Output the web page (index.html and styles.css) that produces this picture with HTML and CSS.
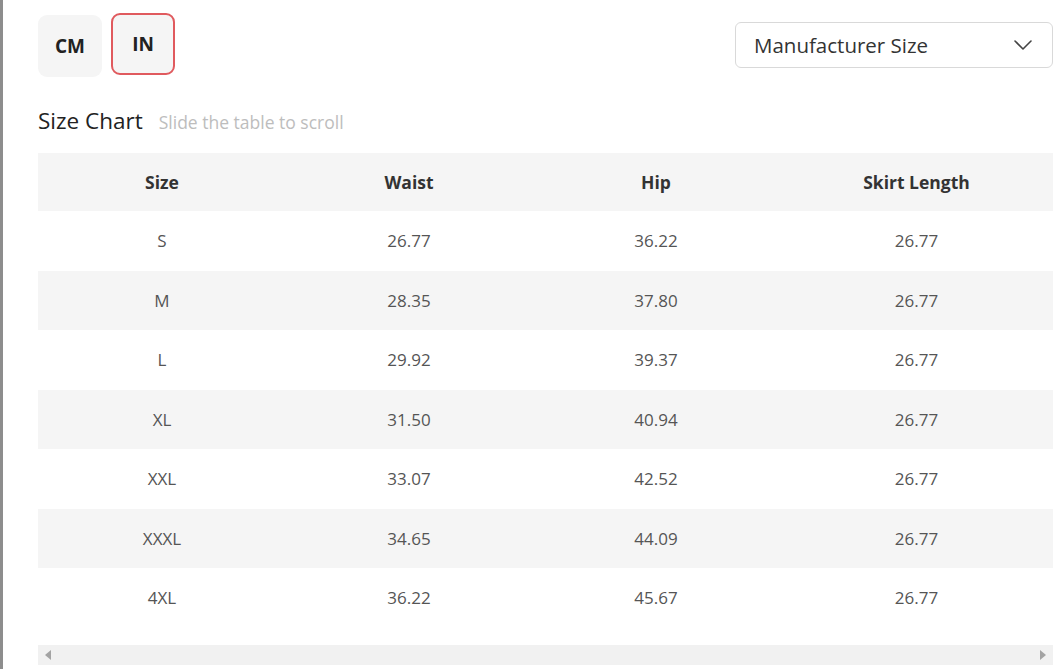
FILE: index.html
```html
<!DOCTYPE html>
<html lang="en">
<head>
<meta charset="utf-8">
<title>Size Chart</title>
<link rel="stylesheet" href="styles.css">
</head>
<body>
<div class="page">
  <div class="top">
    <div class="units">
      <button class="unit">CM</button>
      <button class="unit active">IN</button>
    </div>
    <div class="select">
      <span>Manufacturer Size</span>
      <svg class="chev" width="20" height="12" viewBox="0 0 20 12"><path d="M2 2 L10 10 L18 2" fill="none" stroke="#444" stroke-width="1.6" stroke-linecap="round" stroke-linejoin="round"/></svg>
    </div>
  </div>
  <div class="title">
    <h2>Size Chart</h2>
    <span class="hint">Slide the table to scroll</span>
  </div>
  <table class="chart">
    <colgroup>
      <col class="c1"><col class="c2"><col class="c3"><col class="c4">
    </colgroup>
    <thead>
      <tr><th>Size</th><th>Waist</th><th>Hip</th><th>Skirt Length</th></tr>
    </thead>
    <tbody>
      <tr><td>S</td><td>26.77</td><td>36.22</td><td>26.77</td></tr>
      <tr><td>M</td><td>28.35</td><td>37.80</td><td>26.77</td></tr>
      <tr><td>L</td><td>29.92</td><td>39.37</td><td>26.77</td></tr>
      <tr><td>XL</td><td>31.50</td><td>40.94</td><td>26.77</td></tr>
      <tr><td>XXL</td><td>33.07</td><td>42.52</td><td>26.77</td></tr>
      <tr><td>XXXL</td><td>34.65</td><td>44.09</td><td>26.77</td></tr>
      <tr><td>4XL</td><td>36.22</td><td>45.67</td><td>26.77</td></tr>
    </tbody>
  </table>
  <div class="scrollbar">
    <span class="arrow left"></span>
    <span class="arrow right"></span>
  </div>
</div>
</body>
</html>
```
FILE: styles.css
```css
html, body {
  margin: 0;
  padding: 0;
  background: #fff;
}
body {
  font-family: "Open Sans", "Noto Sans", "Liberation Sans", sans-serif;
  color: #333;
}
.page {
  box-sizing: border-box;
  height: 669px;
  border-left: 3px solid #8d8d8d;
  padding: 0 4px 0 35px;
  display: flex;
  flex-direction: column;
  overflow: hidden;
}
.top {
  display: flex;
  justify-content: space-between;
  align-items: flex-start;
}
.units {
  display: flex;
  gap: 9px;
  padding-top: 15px;
}
.unit {
  width: 64px;
  height: 62px;
  box-sizing: border-box;
  border: 2px solid transparent;
  border-radius: 9px;
  background: #f5f5f5;
  font-family: inherit;
  font-size: 19px;
  font-weight: 700;
  color: #222;
  padding: 0;
}
.unit.active {
  border-color: #e05a5e;
  margin-top: -2px;
}
.select {
  margin-top: 22px;
  width: 318px;
  height: 46px;
  box-sizing: border-box;
  border: 1px solid #d9d9d9;
  border-radius: 6px;
  display: flex;
  align-items: center;
  justify-content: space-between;
  padding: 0 19px 0 18px;
  font-size: 20.5px;
  color: #333;
}
.chev {
  display: block;
}
.title {
  display: flex;
  align-items: baseline;
  gap: 16px;
  margin-top: 28px;
  height: 32px;
}
.title h2 {
  margin: 0;
  font-size: 22.5px;
  font-weight: 400;
  color: #222;
  line-height: 32px;
}
.hint {
  font-size: 17.5px;
  color: #bdbdbd;
}
.chart {
  margin-top: 16px;
  width: 1015px;
  border-collapse: collapse;
  table-layout: fixed;
  font-size: 17px;
}
.c1 { width: 248px; }
.c2 { width: 246px; }
.c3 { width: 248px; }
.c4 { width: 273px; }
.chart th, .chart td {
  text-align: center;
  padding: 0;
}
.chart th {
  height: 58px;
  background: #f5f5f5;
  font-weight: 700;
  font-size: 17.5px;
  color: #333;
}
.chart td {
  height: 59.5px;
  color: #555;
}
.chart tbody tr:nth-child(even) td {
  background: #f5f5f5;
}
.scrollbar {
  margin-top: 17px;
  width: 1015px;
  height: 20px;
  background: #f1f1f1;
  display: flex;
  align-items: center;
  justify-content: space-between;
  padding: 0 7px;
  box-sizing: border-box;
}
.arrow {
  width: 0;
  height: 0;
  border-top: 5px solid transparent;
  border-bottom: 5px solid transparent;
}
.arrow.left {
  border-right: 6px solid #a3a3a3;
}
.arrow.right {
  border-left: 6px solid #a3a3a3;
}
```
